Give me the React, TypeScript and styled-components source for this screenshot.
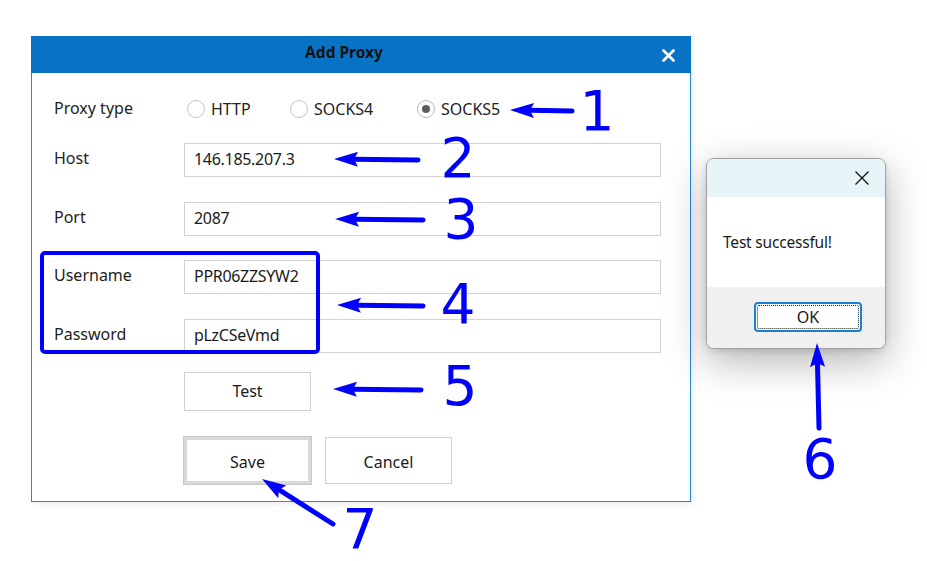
import styled, { createGlobalStyle } from "styled-components";

const GlobalStyle = createGlobalStyle`
  html, body {
    margin: 0;
    padding: 0;
    background: #ffffff;
  }
  body {
    font-family: "Noto Sans", "Liberation Sans", sans-serif;
    color: #1b1b1b;
  }
`;

const BLUE = "#0000ff";

type Point = [number, number];

// arrow line with a filled head at "to"
function Arrow({ from, to }: { from: Point; to: Point }) {
  const [x1, y1] = from;
  const [x2, y2] = to;
  const len = Math.hypot(x2 - x1, y2 - y1);
  const ux = (x2 - x1) / len;
  const uy = (y2 - y1) / len;
  const headLen = 24;
  const half = 7.5;
  const bx = x2 - ux * headLen;
  const by = y2 - uy * headLen;
  const head = [
    `${x2},${y2}`,
    `${bx - uy * half},${by + ux * half}`,
    `${bx + ux * 4},${by + uy * 4}`,
    `${bx + uy * half},${by - ux * half}`,
  ].join(" ");
  return (
    <g>
      <line
        x1={x1}
        y1={y1}
        x2={bx + ux * 4}
        y2={by + uy * 4}
        stroke={BLUE}
        strokeWidth={5}
        strokeLinecap="round"
      />
      <polygon points={head} fill={BLUE} />
    </g>
  );
}

const marks: { n: string; x: number; y: number; from: Point; to: Point }[] = [
  { n: "1", x: 597, y: 130, from: [572, 111], to: [510, 110] },
  { n: "2", x: 458, y: 177, from: [418, 160], to: [334, 159] },
  { n: "3", x: 461, y: 238, from: [423, 220], to: [335, 219] },
  { n: "4", x: 458, y: 323, from: [423, 306], to: [337, 305] },
  { n: "5", x: 460, y: 405, from: [421, 390], to: [333, 389] },
  { n: "6", x: 820, y: 478, from: [819, 428], to: [817, 343] },
  { n: "7", x: 360, y: 548, from: [333, 524], to: [262, 479] },
];

function App() {
  return (
    <>
      <GlobalStyle />
      <S.Desktop>
        <S.Dialog>
          <S.TitleBar>
            <S.Title>Add Proxy</S.Title>
            <S.TitleClose>
              <svg width="13" height="13" viewBox="0 0 13 13">
                <path
                  d="M1.5 1.5 L11.5 11.5 M11.5 1.5 L1.5 11.5"
                  stroke="#ffffff"
                  strokeWidth="2.6"
                  strokeLinecap="round"
                />
              </svg>
            </S.TitleClose>
          </S.TitleBar>

          <S.Body>
            <S.TypeRow>
              <S.Label>Proxy type</S.Label>
              <S.Radios>
                <S.Radio $width={103}>
                  <S.RadioDot />
                  HTTP
                </S.Radio>
                <S.Radio $width={127}>
                  <S.RadioDot />
                  SOCKS4
                </S.Radio>
                <S.Radio>
                  <S.RadioDot $checked />
                  SOCKS5
                </S.Radio>
              </S.Radios>
            </S.TypeRow>

            <S.Fields>
              <S.Label>Host</S.Label>
              <S.Input readOnly value="146.185.207.3" />
              <S.Label>Port</S.Label>
              <S.Input readOnly value="2087" />
              <S.Label>Username</S.Label>
              <S.Input readOnly value="PPR06ZZSYW2" />
              <S.Label>Password</S.Label>
              <S.Input readOnly value="pLzCSeVmd" />
            </S.Fields>

            <S.TestRow>
              <S.Button>Test</S.Button>
            </S.TestRow>

            <S.Actions>
              <S.Button $default $tall>
                Save
              </S.Button>
              <S.Button $tall>Cancel</S.Button>
            </S.Actions>
          </S.Body>
        </S.Dialog>

        <S.MessageBox>
          <S.MessageHeader>
            <svg width="16" height="16" viewBox="0 0 16 16">
              <path
                d="M1.5 1.5 L14.5 14.5 M14.5 1.5 L1.5 14.5"
                stroke="#111111"
                strokeWidth="1.3"
              />
            </svg>
          </S.MessageHeader>
          <S.MessageText>Test successful!</S.MessageText>
          <S.MessageFooter>
            <S.OkButton>
              <S.FocusRing>OK</S.FocusRing>
            </S.OkButton>
          </S.MessageFooter>
        </S.MessageBox>

        {/* callout marks */}
        <S.Callouts width="927" height="561" viewBox="0 0 927 561">
          <rect
            x="42"
            y="253"
            width="276"
            height="99"
            rx="3"
            fill="none"
            stroke={BLUE}
            strokeWidth="4"
          />
          {marks.map((m) => (
            <g key={m.n}>
              <Arrow from={m.from} to={m.to} />
              <text
                x={m.x}
                y={m.y}
                fill={BLUE}
                fontSize="55"
                fontFamily="'DejaVu Sans', sans-serif"
                textAnchor="middle"
              >
                {m.n}
              </text>
            </g>
          ))}
        </S.Callouts>
      </S.Desktop>
    </>
  );
}

const S = {
  Desktop: styled.div`
    position: relative;
    width: 927px;
    height: 561px;
    box-sizing: border-box;
    padding: 36px 0 0 31px;
    display: flex;
    align-items: flex-start;
    overflow: hidden;
  `,
  Dialog: styled.div`
    width: 660px;
    height: 466px;
    box-sizing: border-box;
    display: flex;
    flex-direction: column;
    background: #ffffff;
    box-shadow: 2px 2px 6px rgba(0, 0, 0, 0.08);
  `,
  TitleBar: styled.div`
    height: 37px;
    flex: none;
    box-sizing: border-box;
    background: #0873c4;
    display: flex;
    align-items: center;
    justify-content: center;
    position: relative;
    padding: 0 34px 5px 0;
  `,
  Title: styled.div`
    color: #111111;
    font-weight: 700;
    font-size: 15.5px;
  `,
  TitleClose: styled.div`
    position: absolute;
    right: 16px;
    top: 13px;
    display: flex;
  `,
  Body: styled.div`
    flex: 1;
    border: 1px solid #2a86d2;
    border-top: none;
    padding: 20px 29px 17px 22px;
    display: flex;
    flex-direction: column;
  `,
  TypeRow: styled.div`
    height: 34px;
    display: flex;
    align-items: center;
  `,
  Label: styled.div`
    width: 130px;
    font-size: 16px;
    color: #222222;
    align-self: center;
    margin-top: -4px;
  `,
  Radios: styled.div`
    display: flex;
    align-items: center;
    margin-left: 3px;
    margin-top: -3px;
  `,
  Radio: styled.label<{ $width?: number }>`
    width: ${(p) => (p.$width ? `${p.$width}px` : "auto")};
    display: flex;
    align-items: center;
    gap: 6px;
    font-size: 16px;
    color: #222222;
  `,
  RadioDot: styled.span<{ $checked?: boolean }>`
    width: 18px;
    height: 18px;
    box-sizing: border-box;
    border-radius: 50%;
    border: 1.5px solid ${(p) => (p.$checked ? "#b8b8b8" : "#c6c6c6")};
    background: #ffffff;
    display: flex;
    align-items: center;
    justify-content: center;

    &::after {
      content: "";
      display: ${(p) => (p.$checked ? "block" : "none")};
      width: 8px;
      height: 8px;
      border-radius: 50%;
      background: #5e5e5e;
    }
  `,
  Fields: styled.div`
    margin-top: 16px;
    display: grid;
    grid-template-columns: 130px 1fr;
    grid-auto-rows: 34px;
    row-gap: 24.7px;
  `,
  Input: styled.input`
    box-sizing: border-box;
    width: 100%;
    height: 34px;
    border: 1.5px solid #d3d3d3;
    padding: 0 0 2px 9px;
    font-family: inherit;
    font-size: 16px;
    color: #1b1b1b;
    background: #ffffff;
    outline: none;
    letter-spacing: -0.3px;
  `,
  TestRow: styled.div`
    margin-top: 19px;
    padding-left: 130px;
    display: flex;
  `,
  Actions: styled.div`
    margin-top: 26px;
    padding-left: 130px;
    display: flex;
    gap: 14px;
  `,
  Button: styled.button<{ $default?: boolean; $tall?: boolean }>`
    width: 127px;
    height: ${(p) => (p.$tall ? "47px" : "39px")};
    box-sizing: border-box;
    background: #ffffff;
    border: ${(p) => (p.$default ? "3px solid #d8d8d8" : "1.5px solid #d0d0d0")};
    box-shadow: ${(p) => (p.$default ? "0 0 0 1px #c9c9c9" : "none")};
    font-family: inherit;
    font-size: 16px;
    color: #1b1b1b;
    padding: ${(p) => (p.$tall ? "2px 0 0" : "0 0 2px")};
  `,
  MessageBox: styled.div`
    margin-left: 15px;
    margin-top: 122px;
    width: 180px;
    height: 191px;
    box-sizing: border-box;
    border: 1px solid #a2a2a2;
    border-radius: 8px;
    overflow: hidden;
    display: flex;
    flex-direction: column;
    background: #ffffff;
    box-shadow: 0 12px 40px rgba(0, 0, 0, 0.3), 0 2px 6px rgba(0, 0, 0, 0.12);
  `,
  MessageHeader: styled.div`
    height: 38px;
    flex: none;
    background: #e6f4f8;
    display: flex;
    align-items: center;
    justify-content: flex-end;
    padding-right: 15px;
  `,
  MessageText: styled.div`
    flex: 1;
    display: flex;
    align-items: center;
    padding-left: 16px;
    font-size: 15.5px;
    color: #1b1b1b;
    letter-spacing: -0.2px;
  `,
  MessageFooter: styled.div`
    height: 61px;
    flex: none;
    background: #f0f0f0;
    display: flex;
    justify-content: flex-end;
    align-items: flex-start;
    padding: 15px 23px 0 0;
    box-sizing: border-box;
  `,
  OkButton: styled.button`
    width: 108px;
    height: 30px;
    box-sizing: border-box;
    border: 2px solid #1b7fd6;
    border-radius: 4px;
    background: #fdfdfd;
    padding: 1px;
    display: flex;
  `,
  FocusRing: styled.span`
    flex: 1;
    border: 1px dotted #222222;
    border-radius: 2px;
    display: flex;
    align-items: center;
    justify-content: center;
    font-family: "Noto Sans", "Liberation Sans", sans-serif;
    font-size: 16px;
    color: #1b1b1b;
  `,
  Callouts: styled.svg`
    position: absolute;
    left: 0;
    top: 0;
    pointer-events: none;
  `,
};

export default App;
